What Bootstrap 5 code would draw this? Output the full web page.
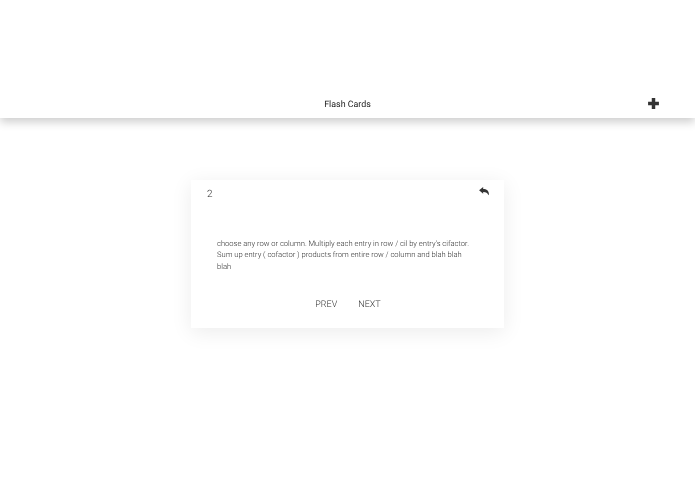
<!DOCTYPE html>
<html lang="en"><head><meta charset="utf-8">
<title>Flash Cards</title>
<link rel="stylesheet" href="https://cdn.jsdelivr.net/npm/bootstrap@5.3.0/dist/css/bootstrap.min.css">
<style>
html,body{height:494px;overflow:hidden;background:#fff;font-family:Roboto,sans-serif;text-rendering:geometricPrecision}
.fc-page{height:494px}
.fc-spacer{height:90px}
.fc-bar{height:28px;box-shadow:0 4px 10px rgba(0,0,0,.2);padding-right:35px}
.fc-title{font-size:8.9px;color:#222;line-height:30px}
.fc-plus{width:13px;height:13px;fill:#333;margin-bottom:1px}
.fc-main{padding-top:62px}
.fc-card{width:313px;height:148px;box-shadow:0 4px 20px rgba(0,0,0,.08);padding:7px 15px 0 16px;color:#555}
.fc-num{font-size:10px;font-weight:300;line-height:15px;color:#333}
.fc-back{width:10px;height:9px;fill:#333}
.fc-text{font-size:7.6px;font-weight:300;line-height:11.4px;padding:36px 17px 0 10px;height:96px;color:#333;margin:0}
.fc-link{font-size:9px;font-weight:300;color:#333;line-height:14px;text-decoration:none}
.fc-nav{gap:21px}
.fc-title,.fc-num,.fc-text,.fc-link,.fc-plus,.fc-back{filter:blur(.4px)}
</style></head>
<body>
<div class="fc-page d-flex flex-column">
<div class="fc-spacer bg-white position-relative z-1"></div>
<header class="fc-bar bg-white position-relative d-flex align-items-center justify-content-end">
<span class="fc-title position-absolute top-0 start-50 translate-middle-x">Flash Cards</span>
<svg class="fc-plus" viewBox="0 0 12 12" aria-label="add"><path d="M4.400 1h3.200v3.400H11v3.200H7.600V11H4.400V7.600H1V4.400h3.400z"/></svg>
</header>
<main class="fc-main d-flex justify-content-center">
<section class="fc-card bg-white">
<div class="d-flex justify-content-between align-items-start">
<span class="fc-num">2</span>
<svg class="fc-back" viewBox="0 0 12 11" aria-label="back"><path d="M0 4 5 0v2.400c4.200 0 7 2 7 6.600l-.6 1C10.400 7.200 8.400 6.200 5 6.200V8.400z"/></svg>
</div>
<p class="fc-text">choose any row or column. Multiply each entry in row / cil by entry's cifactor. Sum up entry ( cofactor ) products from entire row / column and blah blah blah</p>
<nav class="fc-nav d-flex justify-content-center">
<a class="fc-link" href="#">PREV</a>
<a class="fc-link" href="#">NEXT</a>
</nav>
</section>
</main>
</div>
<script src="https://cdn.jsdelivr.net/npm/bootstrap@5.3.0/dist/js/bootstrap.bundle.min.js"></script>
</body></html>
